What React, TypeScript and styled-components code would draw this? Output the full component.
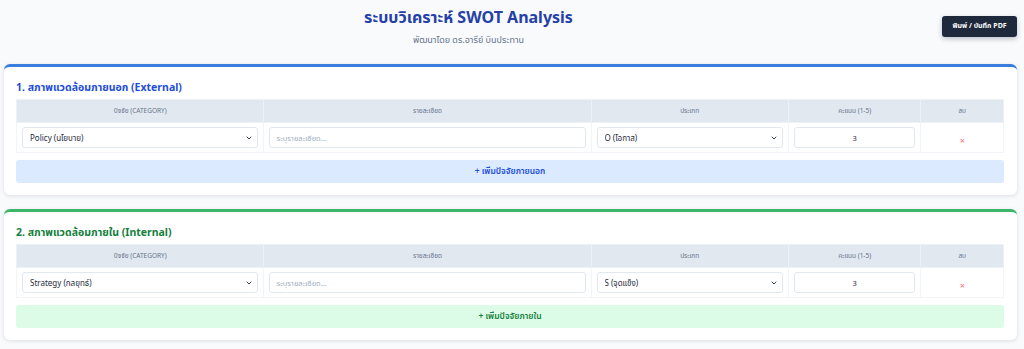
import React from 'react';
import styled, { createGlobalStyle } from 'styled-components';
import { ChevronDown } from 'lucide-react';

const GlobalStyle = createGlobalStyle`
  body {
    margin: 0;
    background-color: #f8fafc;
    font-family: "Noto Sans", "Noto Sans Thai", "Liberation Sans", sans-serif;
  }
`;

const Page = styled.div`
  padding: 6px 7px 8px 4px;
`;

const Header = styled.header`
  display: flex;
  align-items: center;
  gap: 9px;
  margin-bottom: 18px;
`;

const TitleBlock = styled.div`
  flex: 1;
  text-align: center;
`;

const Title = styled.h1`
  margin: 0;
  font-size: 16px;
  line-height: 22px;
  font-weight: 700;
  color: #2541a8;
`;

const Subtitle = styled.p`
  margin: 6px 0 0;
  font-size: 9px;
  line-height: 12px;
  color: #64748b;
`;

const PrintButton = styled.button`
  width: 75px;
  height: 21px;
  border: none;
  border-radius: 3px;
  background-color: #1e293b;
  color: #fff;
  font-family: inherit;
  font-size: 7px;
  font-weight: 700;
  box-shadow: 0 2px 5px rgba(15, 23, 42, 0.25);
  padding: 0;
`;

const Card = styled.section<{ $accent: string }>`
  background-color: #fff;
  border-top: 3px solid ${(p) => p.$accent};
  border-radius: 6px;
  padding: 12px 13px 12px 12px;
  box-shadow: 0 1px 4px rgba(15, 23, 42, 0.12);
  margin-bottom: 14px;
`;

const CardTitle = styled.h2<{ $color: string }>`
  margin: 0 0 4px;
  font-size: 10.5px;
  line-height: 16px;
  font-weight: 700;
  color: ${(p) => p.$color};
`;

const Table = styled.table`
  width: 100%;
  border-collapse: collapse;
  table-layout: fixed;
`;

const Th = styled.th<{ $width: string }>`
  width: ${(p) => p.$width};
  height: 22px;
  padding: 0;
  background-color: #e2e8f0;
  border: 1px solid #eef2f6;
  font-size: 6.5px;
  font-weight: 400;
  color: #64748b;
  text-align: center;
`;

const Td = styled.td`
  height: 29px;
  padding: 0 5px;
  border: 1px solid #f1f5f9;
  text-align: center;
`;

const SelectWrap = styled.div`
  position: relative;
`;

const Select = styled.select`
  display: block;
  box-sizing: border-box;
  width: 100%;
  height: 21px;
  appearance: none;
  border: 1px solid #e2e8f0;
  border-radius: 3px;
  background-color: #fff;
  padding: 0 7px;
  font-family: inherit;
  font-size: 8px;
  font-weight: 400;
  color: #1e293b;
`;

const Chevron = styled(ChevronDown)`
  position: absolute;
  right: 5px;
  top: 7px;
  pointer-events: none;
  color: #334155;
`;

const TextInput = styled.input<{ $center?: boolean }>`
  display: block;
  box-sizing: border-box;
  width: 100%;
  height: 21px;
  border: 1px solid #e2e8f0;
  border-radius: 3px;
  padding: 0 6px;
  font-family: inherit;
  font-size: 7.5px;
  color: #1e293b;
  text-align: ${(p) => (p.$center ? 'center' : 'left')};
  &::placeholder {
    color: #a0aec0;
  }
`;

const DeleteMark = styled.span`
  color: #f87171;
  font-size: 9px;
`;

const AddButton = styled.button<{ $bg: string; $color: string }>`
  display: block;
  width: 100%;
  height: 23px;
  margin-top: 7px;
  border: none;
  border-radius: 3px;
  background-color: ${(p) => p.$bg};
  color: ${(p) => p.$color};
  font-family: inherit;
  font-size: 8.5px;
  font-weight: 600;
`;

const columns = [
  { label: 'ปัจจัย (CATEGORY)', width: '25.1%' },
  { label: 'รายละเอียด', width: '33.2%' },
  { label: 'ประเภท', width: '20%' },
  { label: 'คะแนน (1-5)', width: '13.4%' },
  { label: 'ลบ', width: '8.3%' },
];

type Section = {
  title: string;
  accent: string;
  color: string;
  bg: string;
  category: string;
  type: string;
  addLabel: string;
};

const sections: Section[] = [
  {
    title: '1. สภาพแวดล้อมภายนอก (External)',
    accent: '#3b7ddd',
    color: '#1d4ed8',
    bg: '#dbeafe',
    category: 'Policy (นโยบาย)',
    type: 'O (โอกาส)',
    addLabel: '+ เพิ่มปัจจัยภายนอก',
  },
  {
    title: '2. สภาพแวดล้อมภายใน (Internal)',
    accent: '#3fb56a',
    color: '#15803d',
    bg: '#dcfce7',
    category: 'Strategy (กลยุทธ์)',
    type: 'S (จุดแข็ง)',
    addLabel: '+ เพิ่มปัจจัยภายใน',
  },
];

const FactorCard = ({ s }: { s: Section }) => (
  <Card $accent={s.accent}>
    <CardTitle $color={s.color}>{s.title}</CardTitle>
    <Table>
      <thead>
        <tr>
          {columns.map((c) => (
            <Th key={c.label} $width={c.width}>
              {c.label}
            </Th>
          ))}
        </tr>
      </thead>
      <tbody>
        <tr>
          <Td>
            <SelectWrap>
              <Select defaultValue={s.category}>
                <option>{s.category}</option>
              </Select>
              <Chevron size={8} strokeWidth={3} />
            </SelectWrap>
          </Td>
          <Td>
            <TextInput placeholder="ระบุรายละเอียด..." />
          </Td>
          <Td>
            <SelectWrap>
              <Select defaultValue={s.type}>
                <option>{s.type}</option>
              </Select>
              <Chevron size={8} strokeWidth={3} />
            </SelectWrap>
          </Td>
          <Td>
            <TextInput $center defaultValue="3" />
          </Td>
          <Td>
            <DeleteMark>×</DeleteMark>
          </Td>
        </tr>
      </tbody>
    </Table>
    <AddButton $bg={s.bg} $color={s.color}>
      {s.addLabel}
    </AddButton>
  </Card>
);

const App = () => {
  return (
    <>
      <GlobalStyle />
      <Page>
        <Header>
          <TitleBlock>
            <Title>ระบบวิเคราะห์ SWOT Analysis</Title>
            <Subtitle>พัฒนาโดย ดร.อารีย์ บินประทาน</Subtitle>
          </TitleBlock>
          <PrintButton>พิมพ์ / บันทึก PDF</PrintButton>
        </Header>
        {sections.map((s) => (
          <FactorCard key={s.title} s={s} />
        ))}
      </Page>
    </>
  );
};

export default App;
